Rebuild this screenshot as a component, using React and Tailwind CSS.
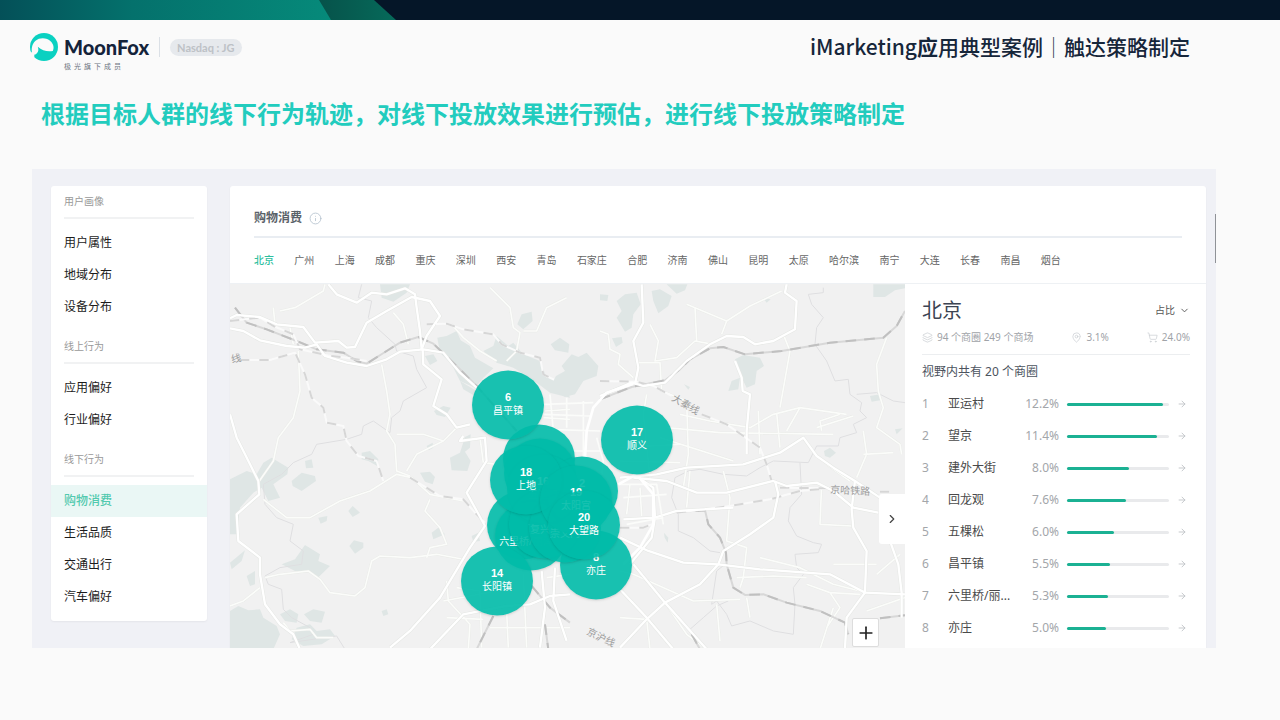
import React, { useState } from 'react';
import { ArrowRight, ChevronDown, ChevronRight, Info, Layers, MapPin, Plus, ShoppingCart } from 'lucide-react';

const menu = [
  { title: '用户画像', items: ['用户属性', '地域分布', '设备分布'] },
  { title: '线上行为', items: ['应用偏好', '行业偏好'] },
  { title: '线下行为', items: ['购物消费', '生活品质', '交通出行', '汽车偏好'] },
];

const cities = [
  '北京', '广州', '上海', '成都', '重庆', '深圳', '西安', '青岛', '石家庄', '合肥',
  '济南', '佛山', '昆明', '太原', '哈尔滨', '南宁', '大连', '长春', '南昌', '烟台',
];

const districts = [
  { name: '亚运村', value: '12.2%', bar: 94 },
  { name: '望京', value: '11.4%', bar: 88 },
  { name: '建外大街', value: '8.0%', bar: 61 },
  { name: '回龙观', value: '7.6%', bar: 58 },
  { name: '五棵松', value: '6.0%', bar: 46 },
  { name: '昌平镇', value: '5.5%', bar: 42 },
  { name: '六里桥/丽...', value: '5.3%', bar: 40 },
  { name: '亦庄', value: '5.0%', bar: 38 },
];

// centre of every bubble on the map, later ones lie on top
const pins = [
  { x: 309, y: 175, n: '', name: '' },
  { x: 310, y: 189, n: '', name: '' },
  { x: 293, y: 241, n: '', name: '' },
  { x: 301, y: 252, n: '7', name: '六里桥/丽泽桥' },
  { x: 278, y: 121, n: '6', name: '昌平镇' },
  { x: 267, y: 297, n: '14', name: '长阳镇' },
  { x: 366, y: 281, n: '8', name: '亦庄' },
  { x: 407, y: 156, n: '17', name: '顺义' },
  { x: 352, y: 207, n: '2', name: '' },
  { x: 313, y: 205, n: '16', name: '五道口' },
  { x: 315, y: 240, n: '', name: '复兴门' },
  { x: 335, y: 244, n: '', name: '崇文门' },
  { x: 296, y: 196, n: '18', name: '上地' },
  { x: 346, y: 216, n: '19', name: '太阳宫' },
  { x: 354, y: 241, n: '20', name: '大望路' },
];

const greens = [
  'M450 10H540L530 35L490 62L455 50Z',
  'M862 130L875 100L905 92L908 120L880 145Z',
  'M622 170L650 165L680 150L692 178L720 195L735 230L790 262L760 290L735 320L690 300L665 250L630 215Z',
  'M760 210L790 195L800 165L835 195L850 185L880 220L930 240L950 290L1000 300L1020 350L960 335L900 290L850 260L800 245Z',
  'M962 190L990 170L1018 190L1015 215L975 208Z',
  'M585 225L610 220L622 240L600 252Z M690 300L740 330L735 345L700 325Z',
  'M612 390L640 375L662 380L645 408L620 402Z M590 495L608 485L610 500L596 508Z',
  'M570 575L600 572L615 588L608 610L585 602Z',
  'M660 530L690 515L705 468L722 460L720 500L705 512L722 540L712 570L665 568Z',
  'M0 595L50 570L80 580L100 545L125 530L175 560L172 580L130 610L150 650L115 660L95 620L70 635L30 680L20 760L0 760Z',
  'M185 600L215 575L255 585L258 600L215 630L188 615Z M225 540L245 535L250 560L228 562Z',
  'M395 515L420 510L445 535L442 555L415 540L395 535Z',
  'M355 690L368 675L390 695L368 708Z M265 710L292 705L290 720L272 728Z',
  'M358 795L372 778L400 785L400 800L375 818Z',
  'M155 850L195 835L225 792L270 820L265 840L300 855L262 892L235 870L195 870Z',
  'M0 845L45 808L35 840L5 865Z M50 885L75 870V910L60 915Z',
  'M0 990L25 975L55 988L90 985L100 1010L140 1035L150 1060L130 1105H0Z',
  'M150 1000L180 985L205 1000L200 1025L165 1020Z M222 1000L250 985L285 992L275 1025L240 1020Z M185 1075L200 1040L240 1030L260 1050L300 1045L315 1065L275 1090L220 1095Z',
  'M455 990L470 985L475 1000L460 1005Z M605 755L625 740L645 760L610 775Z M725 765L745 755L750 780L730 782Z',
];

const greensEast = [
  'M0 40L25 42L22 60L0 58Z M50 60L75 40L110 35L122 70L100 100L95 140L75 152L50 110L65 90Z',
  'M155 30L180 25L215 45L205 75L175 97L160 60Z M36 172L65 168L68 185L48 198Z M200 10H262L255 28L230 38Z',
  'M820 10H915V22L885 28L855 48H820Z',
  'M405 235L430 222L480 230L492 255L470 270L465 310L440 320L425 290L415 270Z M385 330L395 300L420 290L415 325Z',
  'M672 510L690 500L708 515L690 530L675 525Z M810 345L840 340V358L815 362Z M885 445L908 442L890 460Z',
  'M252 310L270 318L265 326Z M490 52L512 55L500 65Z M192 755L205 770L203 785L194 770Z',
];

const roads = [
  'M0 112L20 102L90 108L140 130L220 138L255 185L325 180L350 200L375 198L410 125L470 90L545 48L600 60L630 105L590 165L575 205',
  'M0 142L40 150L90 178L170 195L225 200L260 190L285 225L350 245L410 255L470 235L510 212L580 205L640 215L690 275L740 320',
  'M295 10L320 40L380 65L425 35L470 40L525 22L555 40L560 80L570 150L575 205',
  'M578 205L580 250L635 295L610 375L650 400L680 440L720 430',
  'M0 400L20 470L45 520L85 600L88 640L20 700L25 780L90 830L90 880L105 970L150 1030L190 1060L210 1105',
  'M700 465L690 480L765 470L770 540L710 635L765 735L720 800L630 950L540 1050L480 1100',
  'M600 1105L700 1000L830 975L900 970L960 945L1020 940M935 870L945 980L930 1100M975 860L970 960L1010 1080',
];

const lanes = [
  'M150 90L195 80L280 30L285 10M205 210L210 330L190 410L145 470L130 540L88 600',
  'M130 80L135 130M180 140L190 190M455 250L470 330L480 400L470 450L495 490L500 570L540 585',
  'M500 460L580 460L640 480L560 520L530 570M640 480L680 440',
  'M100 655L170 710L240 710L330 660L420 630L500 580L545 590L600 640L700 660',
  'M105 890L150 880L235 870L270 895L300 935L375 945L405 920L425 840L450 825L540 830L620 820L700 835',
  'M600 655L585 690L630 740L650 790L600 800L590 830',
  'M780 20L840 80L850 140L870 155L860 210L830 240M1010 50L950 80L920 150L880 150',
  'M665 130L700 170L750 210L800 240M490 95L520 130L535 190M0 975L40 960L90 920',
  'M160 1025L180 1050L240 1045L260 1070L310 1070M650 900L655 960L720 1030L715 1105M680 920L750 930L755 1100M640 960L800 930M650 1010L760 1015M830 990L835 1100M880 880L890 1100M780 1040H1020M950 890L1020 880',
  'M945 390L1020 385M940 410L1020 415M750 470L760 545L800 550',
];

const roadsEast = [
  'M0 345L95 305L130 315L195 305L260 240L330 190L380 165L430 168L465 190L520 180L585 145L590 60L555 35L560 10',
  'M105 310L115 260L100 180L130 125L125 10M405 240L425 290L428 330L450 340L440 450L440 520',
  'M60 590L170 580L260 560L430 550L540 515L610 470L650 525L700 560L765 600L840 650',
  'M100 590L200 600L290 635L380 635L520 600L560 615L650 605L700 630L760 680L835 695',
  'M525 600L535 640L520 710L450 760L370 810L355 850L300 910L195 965L140 1015L60 1100',
  'M60 770L145 810L250 845L355 850L480 865L690 880L795 935L915 940',
  'M100 580L160 620L165 710L155 770L90 850M60 925L140 1010L220 1105M100 850L195 965L320 1105M70 715L165 710L230 690L400 680',
  'M765 600L755 685L760 740L800 810L795 935L740 1010L735 1105M870 780L895 850L905 935L905 1010',
];

const lanesEast = [
  'M0 150L25 160L30 205L60 220L55 250L100 290M110 245H180L185 330L260 360L265 520L250 620M260 70L380 120L450 75L545 30M285 80L290 180M380 120L365 160',
  'M240 400L330 420L450 440L520 400L600 380L740 400M200 440L360 455L700 460M60 540L240 545M180 470L400 540M475 390L480 520M530 395L540 500M600 380L560 450',
  'M550 160L570 210L540 380M150 130L175 180L165 240L230 230L285 180L340 190M140 340L130 400L150 590M60 500L240 490',
  'M860 170L830 250L835 330L850 380L830 440L900 490L905 520M720 400L660 420L665 450M650 440L760 405M680 550L750 600M790 450L800 520L770 590M790 520L880 515',
  'M370 570L390 650L380 780L440 800L430 890L420 920M270 570L260 680M665 610L660 730L755 735M90 610L80 700M120 620L125 705',
  'M480 830L600 860L700 910L780 930M410 890L520 885L620 890M620 910L690 935L780 940M700 850H830M680 1040L720 980L690 935M60 870L100 880L280 960L420 955M440 950L450 1010M350 970L360 1080M205 980L260 1060L320 1105M60 1010L140 1015L150 1105M660 1105L700 980M830 880L900 820M800 990L915 950',
];

const borders = [
  'M395 10L385 50L425 60L415 110L440 140L495 190L500 210L550 225L560 265L590 320L520 360L510 390L485 410L480 455L430 420L400 435L395 460L350 475L260 490L245 520L190 545L155 580L100 610L105 670L140 710L190 730L180 780L220 810L215 850L150 860L105 885L115 910L155 925L160 985L185 1010L240 1040L250 1060L180 1085L320 1065L345 1105',
];

const bordersEast = [
  'M670 20V35L625 40L635 70L670 110L650 140L645 190L680 240L705 300L745 295L750 340L785 365L780 390L800 410L760 430L770 455L720 470L715 495L650 495L625 545L520 540L480 560L440 585L370 580L300 565L265 570L225 590L215 650L235 700L235 750L280 770L330 810L360 815',
  'M600 545L605 640L570 680L565 720L590 765L640 785L665 790L655 815L585 820L590 860L610 880L580 920L585 970L580 1060L520 1050L450 1020L395 1035L380 1000L350 960L335 970L350 870L375 850M385 960L350 975L310 1010L270 1045L290 1090M770 340L830 335L880 360L915 365',
];

const railways = [
  'M15 80L50 125L110 145L200 180L260 205L340 215L380 240L410 248L470 210L510 185L565 168L610 188L680 255L740 315L860 450',
  'M905 915L960 980L1020 1025M790 1005L740 1105M945 1030L955 1105',
];

const railwaysEast = [
  'M0 355L95 318L195 298L240 265L270 235L330 202L370 198L435 220L545 210L690 185L850 170L890 135L915 90',
  'M230 693L315 688L325 730L360 770L378 815L380 850L400 920L435 942L490 940L560 965L660 990L735 1025L745 1060M840 1012L915 1003M275 1060L300 1105',
];

const dashed = [
  'M30 237L120 237L195 215L225 280L245 350L280 380L290 425L340 435L350 480L385 525L440 540L460 600',
  'M590 130L650 128L700 145L790 160L815 190L870 215L930 230L940 280L980 300L1020 298',
  'M540 590L630 645L700 655L740 700L765 725M0 120L90 110L130 135L190 160L210 205L300 225L350 230L410 240',
];

const dashedEast = [
  'M0 300L110 302L160 315L215 345M305 400L380 430L430 465L480 500L500 550L515 600',
  'M230 695L375 677L510 655L600 630L690 622M840 632H870M60 740L130 740L160 728M540 620L690 622',
];

const Strokes = ({ list, color, width, dash }) =>
  list.map((d) => (
    <path key={d} d={d} fill="none" stroke={color} strokeWidth={width} strokeDasharray={dash} strokeLinejoin="round" />
  ));

function CityMap() {
  return (
    <svg className="block h-full w-full" viewBox="0 0 675 365" preserveAspectRatio="xMidYMin slice" aria-hidden="true">
      <rect width="675" height="365" fill="#f1f1f1" />
      <g transform="translate(0 -3) scale(0.3333)">
        {greens.map((d) => <path key={d} d={d} fill="#dfe6e5" />)}
        <Strokes list={borders} color="#dfdfe1" width="3" />
        <Strokes list={lanes} color="#e8eae6" width="7" />
        <Strokes list={lanes} color="#fbfcfa" width="5" />
        <Strokes list={roads} color="#e5e7e4" width="10" />
        <Strokes list={railways} color="#d8d8d8" width="6" />
        <Strokes list={railways} color="#c0c0c0" width="6" dash="32 24" />
        <Strokes list={dashed} color="#fafafa" width="6" />
        <Strokes list={dashed} color="#d6d6d6" width="6" dash="28 30" />
        <Strokes list={roads} color="#ffffff" width="7" />
      </g>
      <g transform="translate(370 -3) scale(0.3333)">
        {greensEast.map((d) => <path key={d} d={d} fill="#dfe6e5" />)}
        <Strokes list={bordersEast} color="#dfdfe1" width="3" />
        <Strokes list={lanesEast} color="#e8eae6" width="7" />
        <Strokes list={lanesEast} color="#fbfcfa" width="5" />
        <Strokes list={roadsEast} color="#e5e7e4" width="10" />
        <Strokes list={railwaysEast} color="#d8d8d8" width="6" />
        <Strokes list={railwaysEast} color="#c0c0c0" width="6" dash="32 24" />
        <Strokes list={dashedEast} color="#fafafa" width="6" />
        <Strokes list={dashedEast} color="#d6d6d6" width="6" dash="28 30" />
        <Strokes list={roadsEast} color="#ffffff" width="7" />
      </g>
      {/* grid of streets between the bubbles */}
      <g transform="translate(220 67) scale(0.3333)">
        <path
          d="M318 75L345 60L335 45L365 10L385 18L410 5L445 45L440 75L400 90L375 130L345 138L300 110Z"
          fill="#dfe6e5"
        />
        <Strokes
          list={['M280 160L430 155M280 190L420 195M290 235L450 240M370 300L450 300M300 130L310 240M350 140V230M400 150V320', 'M440 260L460 330L450 420M500 400H620L640 520M520 440L650 430M530 520L640 500']}
          color="#fbfcfa"
          width="5"
        />
        <Strokes list={['M405 320L410 240L430 170L470 125L550 98', 'M505 400L560 370L610 430V520L570 590L520 640']} color="#ffffff" width="8" />
      </g>
      <g className="fill-[#9c9c9c] font-['Noto_Sans_CJK_SC',sans-serif] text-[10px]">
        <text transform="translate(2 79) rotate(-12)">线</text>
        <text transform="translate(441 116) rotate(30)">大秦线</text>
        <text transform="translate(600 209) rotate(3)">京哈铁路</text>
        <text transform="translate(356 350) rotate(26)">京沪线</text>
      </g>
    </svg>
  );
}

function Logo() {
  return (
    <svg className="h-7 w-7" viewBox="0 0 86 86" aria-hidden="true">
      <circle cx="43" cy="43" r="43" fill="#0ad1c1" />
      <path
        d="M7 66C3 50 6 33 17 24C30 13 52 14 64 26C72 34 75 46 70 55C54 58 37 54 24 42C27 51 26 57 21 62C17 66 12 68 7 66Z"
        fill="#fafafa"
      />
      <path d="M-2 56L3 58L12 64L14 72L6 76L-4 70Z" fill="#fafafa" />
    </svg>
  );
}

export default function App() {
  const [active, setActive] = useState('购物消费');
  const [city, setCity] = useState('北京');

  return (
    <div className="min-h-screen bg-[#fafafa] font-['Noto_Sans','Noto_Sans_CJK_SC',sans-serif] text-[#333]">
      <div className="h-5 bg-[#051628]">
        <svg className="block h-5 w-[396px]" viewBox="0 0 396 20" aria-hidden="true">
          <defs>
            <linearGradient id="band">
              <stop offset="0" stopColor="#045058" />
              <stop offset="0.4" stopColor="#04716c" />
              <stop offset="1" stopColor="#068a7a" />
            </linearGradient>
            <linearGradient id="fold">
              <stop offset="0" stopColor="#06524a" />
              <stop offset="1" stopColor="#066a5a" />
            </linearGradient>
          </defs>
          <path d="M318 0H374L396 20H318Z" fill="url(#fold)" />
          <path d="M0 0H319L331 20H0Z" fill="url(#band)" />
        </svg>
      </div>

      <header className="flex items-start justify-between pt-[13px] pr-[90px] pl-[30px]">
        <div className="flex">
          <Logo />
          <div className="ml-1.5">
            <div className="font-['Lato',sans-serif] text-[20px] leading-7 font-black text-[#14233a]">MoonFox</div>
            <div className="text-[7px] leading-3 tracking-[3px] text-[#6d7480]">极光旗下成员</div>
          </div>
          <div className="mt-1 ml-2.5 h-5 w-px bg-[#dbe0e6]" />
          <div className="mt-1.5 ml-2.5 h-[17px] rounded-full bg-[#e6e9ed] px-[7px] font-['Lato',sans-serif] text-[11px] leading-[17px] font-bold text-[#bdc1c6]">
            Nasdaq : JG
          </div>
        </div>
        <p className="font-['Noto_Sans_CJK_SC',sans-serif] text-[21px] leading-[26px] font-medium text-[#16263a]">
          iMarketing<b>应</b>用典型案例<span className="font-thin">｜</span>触达策略制定
        </p>
      </header>

      <h1 className="mt-[23px] ml-[41px] text-[24px] leading-9 font-bold text-[#22ccbe]">
        根据目标人群的线下行为轨迹，对线下投放效果进行预估，进行线下投放策略制定
      </h1>

      <section className="mt-[37px] mr-16 ml-8 flex h-[479px] items-start gap-[23px] overflow-hidden bg-[#f0f1f6] pt-[17px] pl-[19px]">
        <nav className="w-[156px] shrink-0 rounded-[3px] bg-white shadow-xs">
          {menu.map((group) => (
            <div key={group.title}>
              <h2 className="mx-[13px] h-[33px] border-b-2 border-[#f1f2f3] text-[10px] leading-[30px] text-[#999]">{group.title}</h2>
              <ul className="py-2">
                {group.items.map((item) => (
                  <li key={item}>
                    <button
                      onClick={() => setActive(item)}
                      className={`h-8 w-full px-[13px] text-left text-[12px] ${
                        item === active ? 'bg-[#eaf7f5] font-medium text-[#52c9ae]' : 'text-[#1c1c1c]'
                      }`}
                    >
                      {item}
                    </button>
                  </li>
                ))}
              </ul>
            </div>
          ))}
        </nav>

        <main className="min-w-0 flex-1 rounded-t-[3px] bg-white shadow-xs">
          <div className="mx-6 flex h-[52px] items-center gap-[7px] border-b-2 border-[#e9edf2] pt-3.5">
            <h2 className="text-[12px] font-bold text-[#5a6269]">购物消费</h2>
            <Info size={13} strokeWidth={1.5} className="text-[#b3c0cc]" />
          </div>
          <div className="ml-6 flex h-[45px] w-[807px] items-center justify-between text-[10px] text-[#666]">
            {cities.map((c) => (
              <button key={c} onClick={() => setCity(c)} className={c === city ? 'font-medium text-[#2fbf9f]' : ''}>
                {c}
              </button>
            ))}
          </div>

          <div className="flex h-[366px] border-t border-[#eef1f4]">
            <div className="relative min-w-0 flex-1 overflow-hidden">
              <CityMap />
              {pins.map((pin) => (
                <div
                  key={`${pin.x}-${pin.y}`}
                  style={{ left: pin.x, top: pin.y }}
                  className="absolute flex h-[69px] w-[72px] -translate-x-1/2 -translate-y-1/2 flex-col items-center justify-center rounded-[50%] bg-[#00bba8]/90 pb-1 text-[10px] leading-[13px] whitespace-nowrap text-white shadow-sm"
                >
                  <b className="h-[13px] font-['Liberation_Sans',sans-serif] text-[11px]">{pin.n}</b>
                  <span className="h-[13px]">{pin.name}</span>
                </div>
              ))}
              <button aria-label="收起" className="absolute top-[210px] right-0 flex h-[50px] w-[26px] items-center justify-center rounded-l-[3px] bg-white text-[#444]">
                <ChevronRight size={14} />
              </button>
              <button aria-label="放大" className="absolute right-[26px] bottom-[2px] flex h-[29px] w-[27px] items-center justify-center rounded-[2px] border border-[#ddd] bg-white text-[#222]">
                <Plus size={20} strokeWidth={2} />
              </button>
            </div>

            <aside className="w-[301px] shrink-0 bg-white pr-4 pl-[17px]">
              <div className="flex h-[41px] items-center justify-between pt-3">
                <h3 className="text-[20px] leading-7 text-[#3c4453]">{city}</h3>
                <button className="flex items-center gap-1 text-[10px] text-[#555]">
                  占比 <ChevronDown size={11} />
                </button>
              </div>
              <div className="flex h-[30px] items-center justify-between border-b border-[#eceef0] pb-1 text-[10px] text-[#a0a3a8]">
                <span className="flex items-center gap-1">
                  <Layers size={11} strokeWidth={1.5} className="text-[#c8ccd0]" /> 94 个商圈 249 个商场
                </span>
                <span className="flex items-center gap-1">
                  <MapPin size={11} strokeWidth={1.5} className="text-[#c8ccd0]" /> 3.1%
                </span>
                <span className="flex items-center gap-1">
                  <ShoppingCart size={11} strokeWidth={1.5} className="text-[#c8ccd0]" /> 24.0%
                </span>
              </div>
              <p className="h-[33px] text-[12px] leading-[33px] text-[#4c535e]">视野内共有 20 个商圈</p>
              <ol>
                {districts.map((d, i) => (
                  <li key={d.name} className="flex h-8 items-center text-[12px]">
                    <span className="w-[26px] text-[#a3a6aa]">{i + 1}</span>
                    <span className="w-[66px] whitespace-nowrap text-[#4a4a4a]">{d.name}</span>
                    <span className="flex-1 text-right text-[#a3a6aa]">{d.value}</span>
                    <span className="ml-2 h-[3px] w-[102px] rounded-full bg-[#e9eaec]">
                      <span className="block h-[3px] rounded-full bg-[#1bb193]" style={{ width: `${d.bar}%` }} />
                    </span>
                    <ArrowRight size={10} strokeWidth={2} className="mr-[3px] ml-2 text-[#bcbfc3]" />
                  </li>
                ))}
              </ol>
            </aside>
          </div>
        </main>
        <div className="-ml-[14px] mt-[28px] h-[49px] w-px shrink-0 bg-[#8f9297]" />
      </section>
    </div>
  );
}
